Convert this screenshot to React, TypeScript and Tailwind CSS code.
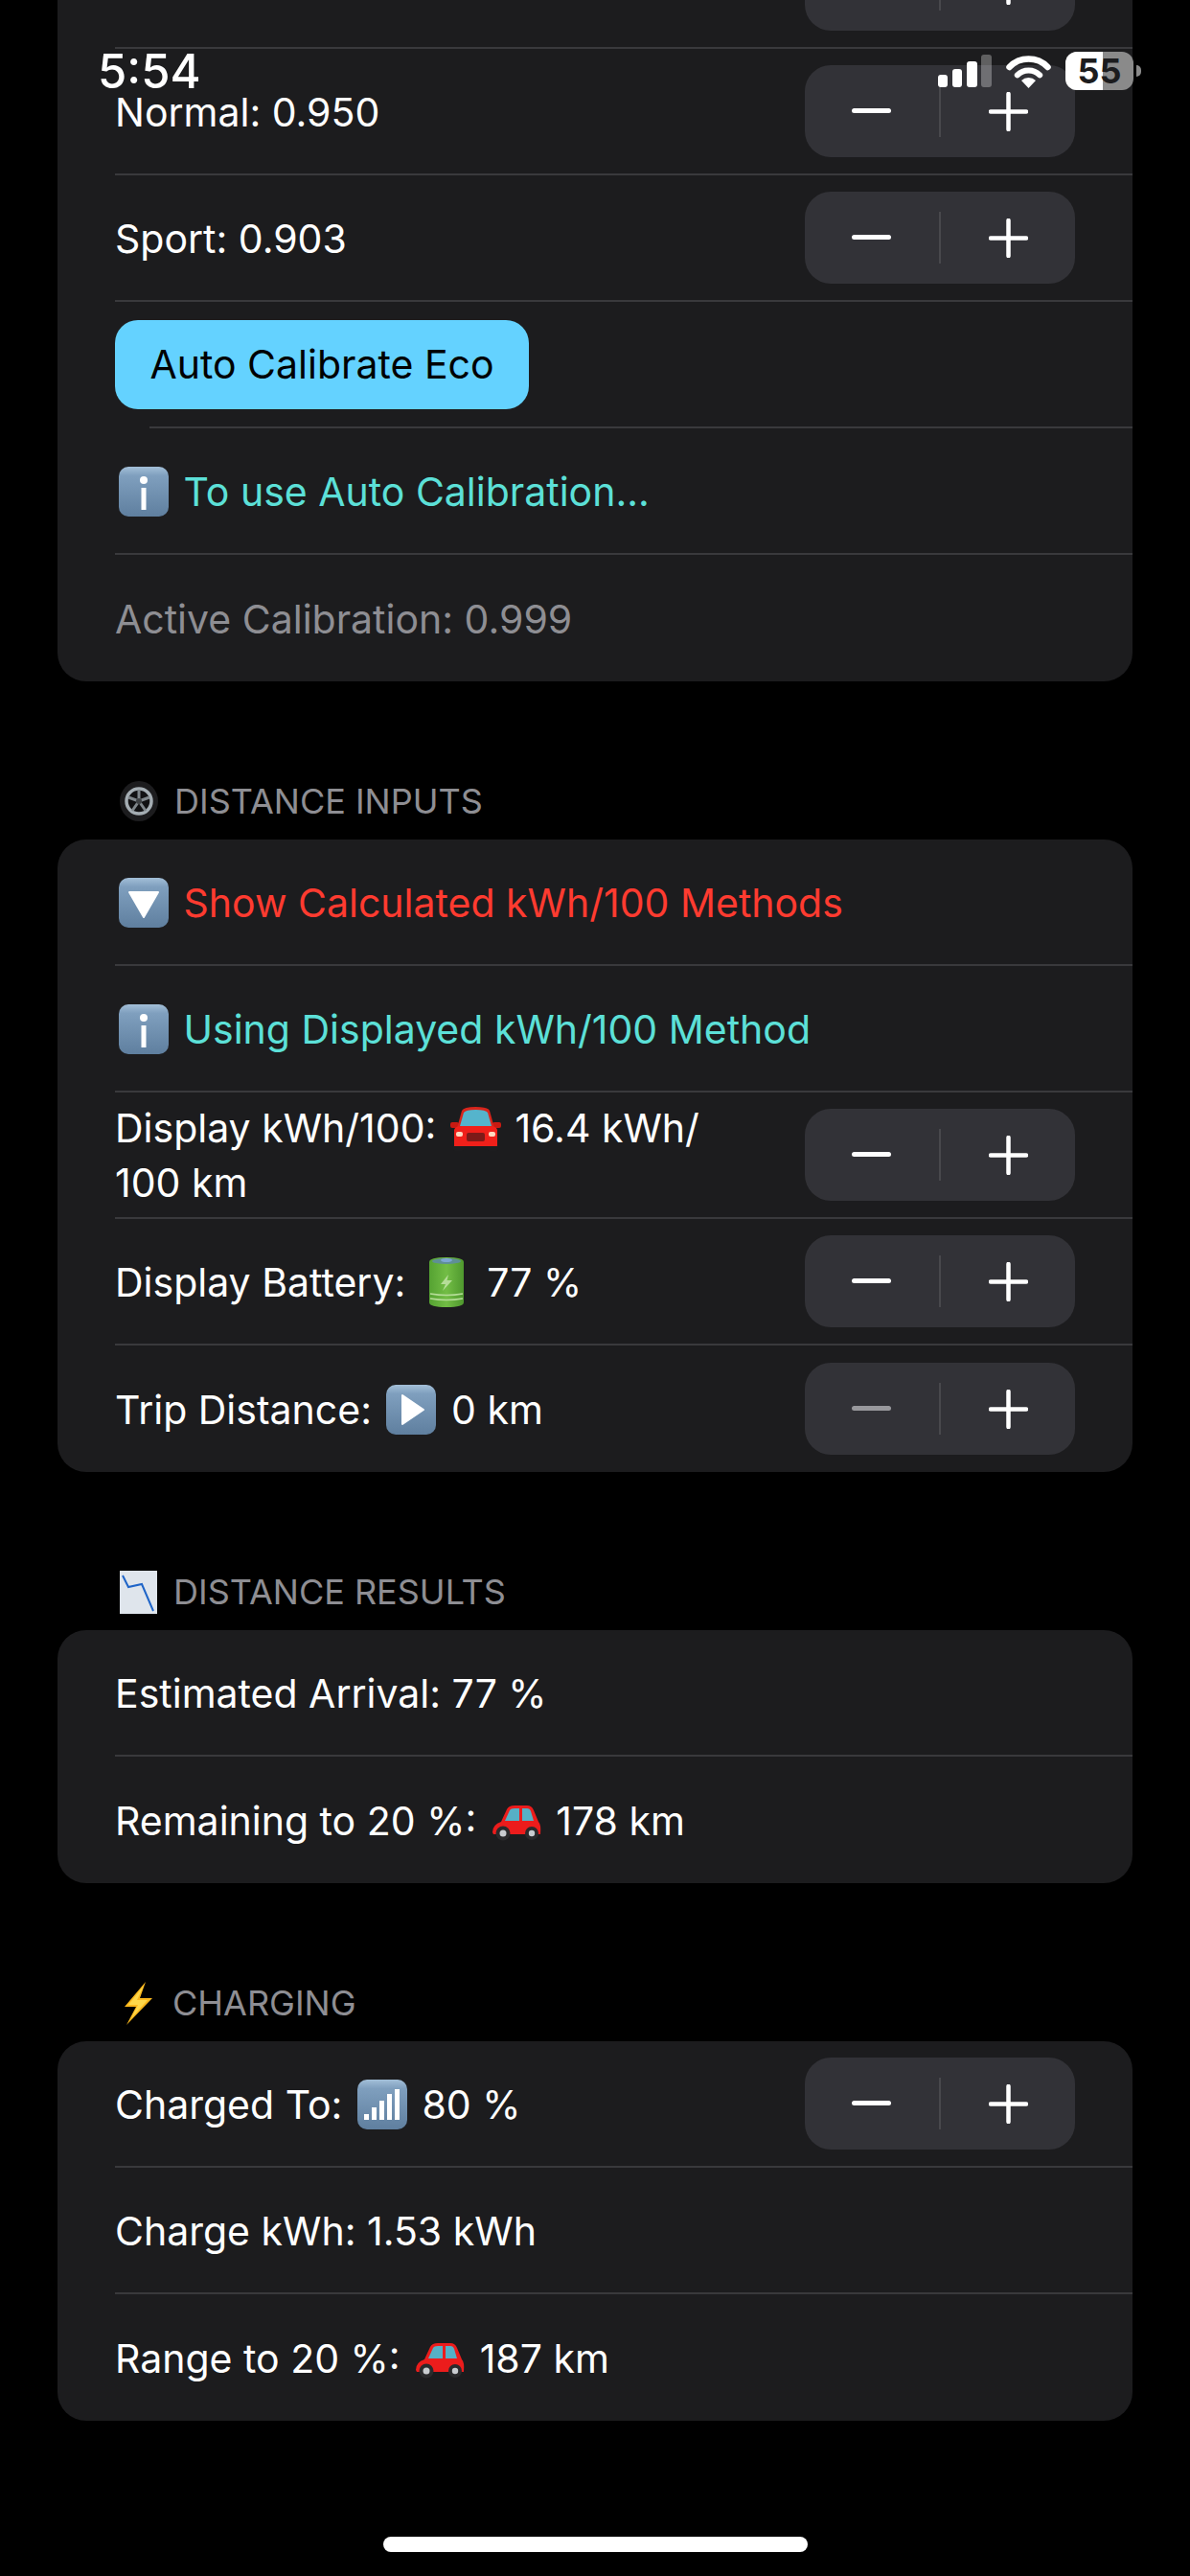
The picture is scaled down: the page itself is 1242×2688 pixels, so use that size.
import { ReactNode } from 'react'

const font = { fontFamily: 'Inter, "Noto Sans", sans-serif' }

function BlueBox({ children }: { children: ReactNode }) {
  return (
    <svg viewBox="0 0 52 52" className="inline-block w-[52px] h-[52px] align-[-11px] mx-[4px]">
      <defs>
        <linearGradient id="boxFill" x1="0" y1="0" x2="0" y2="1">
          <stop offset="0" stopColor="#a3bfd8" />
          <stop offset="0.18" stopColor="#7f9fbe" />
          <stop offset="1" stopColor="#5f7f9f" />
        </linearGradient>
      </defs>
      <rect width="52" height="52" rx="10" fill="url(#boxFill)" />
      {children}
    </svg>
  )
}

const InfoEmoji = () => (
  <BlueBox>
    <circle cx="26" cy="14" r="4" fill="#fff" />
    <rect x="23.5" y="22" width="5" height="23" fill="#fff" />
  </BlueBox>
)

const DownEmoji = () => (
  <BlueBox>
    <path d="M11 15H41L26 41Z" fill="#fff" stroke="#fff" strokeWidth="2" strokeLinejoin="round" />
  </BlueBox>
)

const PlayEmoji = () => (
  <BlueBox>
    <path d="M17 11L39 26L17 41Z" fill="#fff" stroke="#fff" strokeWidth="2" strokeLinejoin="round" />
  </BlueBox>
)

const SignalEmoji = () => (
  <BlueBox>
    <rect x="7" y="36" width="5" height="6" fill="#fff" />
    <rect x="15" y="29" width="5" height="13" fill="#fff" />
    <rect x="23" y="22" width="5" height="20" fill="#fff" />
    <rect x="31" y="15" width="5" height="27" fill="#fff" />
    <rect x="39" y="10" width="5" height="32" fill="#fff" />
  </BlueBox>
)

const FrontCarEmoji = () => (
  <svg viewBox="0 0 53 46" className="inline-block w-[53px] h-[46px] align-[-9px] mx-[3px]">
    <rect x="3" y="38" width="11" height="8" rx="2" fill="#1d1d1f" />
    <rect x="39" y="38" width="11" height="8" rx="2" fill="#1d1d1f" />
    <rect x="0" y="16" width="9" height="6" rx="2" fill="#c81a12" />
    <rect x="44" y="16" width="9" height="6" rx="2" fill="#c81a12" />
    <path d="M12 4Q14 0 26.500 0T41 4L46 22H7Z" fill="#d8251c" />
    <path d="M14 6Q16 3 26.500 3T39 6L43 20H10Z" fill="#55b4cc" />
    <path d="M4 24Q5 20 12 20H41Q48 20 49 24V41H4Z" fill="#f0201a" />
    <rect x="17" y="27" width="19" height="9" rx="2" fill="#7d1a18" />
    <rect x="6" y="26" width="7" height="5" rx="2" fill="#ffd9c0" />
    <rect x="40" y="26" width="7" height="5" rx="2" fill="#ffd9c0" />
  </svg>
)

const SideCarEmoji = () => (
  <svg viewBox="0 0 52 38" className="inline-block w-[52px] h-[38px] align-[-6px] mx-[4px]">
    <path d="M1 29Q1 21 10 18L16 5Q18 1 24 1H37Q42 1 44 6L49 18Q52 21 51 31H2Z" fill="#ec1c1c" />
    <path d="M19 6Q20 4 24 4H29V17H14Z" fill="#56b0c6" />
    <path d="M32 4H37Q40 4 41 7L44 17H32Z" fill="#56b0c6" />
    <circle cx="12" cy="30" r="7.500" fill="#2a2a2c" />
    <circle cx="12" cy="30" r="3.500" fill="#c9ccd0" />
    <circle cx="42" cy="30" r="7" fill="#2a2a2c" />
    <circle cx="42" cy="30" r="3.200" fill="#c9ccd0" />
  </svg>
)

const BatteryEmoji = () => (
  <svg viewBox="0 0 36 52" className="inline-block w-[38px] h-[52px] align-[-11px] mx-[12px]">
    <defs>
      <linearGradient id="cell" x1="0" y1="0" x2="1" y2="0">
        <stop offset="0" stopColor="#55a232" />
        <stop offset="0.5" stopColor="#72bd45" />
        <stop offset="1" stopColor="#4f982e" />
      </linearGradient>
    </defs>
    <path d="M0 5Q0 0 18 0T36 5V47Q36 52 18 52T0 47Z" fill="url(#cell)" />
    <ellipse cx="18" cy="4" rx="15" ry="3" fill="#5f8f96" />
    <ellipse cx="18" cy="3" rx="6" ry="2" fill="#7da6d4" />
    <path d="M20 18L12 28H17L14 35L24 24H18.500Z" fill="#b5dd98" />
    <path d="M1 38Q18 41 35 38M1 43Q18 46 35 43" stroke="#b5dd98" strokeWidth="1.500" fill="none" />
  </svg>
)

const WheelEmoji = () => (
  <svg viewBox="0 0 40 42" className="w-[40px] h-[42px] shrink-0">
    <ellipse cx="20" cy="21" rx="20" ry="21" fill="#1c1c1e" />
    <circle cx="20" cy="21" r="13" fill="#111113" stroke="#a4adb3" strokeWidth="3.500" />
    <path d="M20 21V9M20 21L31 17M20 21L27 31M20 21L13 31M20 21L9 17" stroke="#7f868b" strokeWidth="3" />
    <circle cx="20" cy="21" r="3" fill="#3e4144" />
  </svg>
)

const ChartEmoji = () => (
  <svg viewBox="0 0 39 45" className="w-[39px] h-[45px] shrink-0">
    <rect width="39" height="45" fill="#dfe5ec" />
    <path d="M3 5L9 17L23 14L35 42" stroke="#1f65c8" strokeWidth="2" fill="none" />
  </svg>
)

const ZapEmoji = () => (
  <svg viewBox="0 0 30 45" className="w-[30px] h-[45px] shrink-0 mx-[4px]">
    <path d="M23 0L1 26H13L3 45L30 17H17Z" fill="#fbb81d" />
    <path d="M21 4L5 24H15L8 38L25 19H14Z" fill="#ffd84a" />
  </svg>
)

function Stepper({ minusDim = false }: { minusDim?: boolean }) {
  return (
    <div className="flex items-center w-[282px] h-[96px] rounded-[27px] bg-[#323237] shrink-0">
      <div className="flex-1 flex justify-center">
        <div className={`w-[41px] h-[5px] rounded-full -translate-x-[1px] -translate-y-[1px] ${minusDim ? 'bg-[#98989c]' : 'bg-white'}`} />
      </div>
      <div className="w-[2px] h-[54px] bg-[#48484c]" />
      <div className="flex-1 flex justify-center">
        <svg viewBox="0 0 41 41" className="w-[41px] h-[41px]">
          <path d="M2 20.500H39M20.500 2V39" stroke="#fff" strokeWidth="4.500" strokeLinecap="round" />
        </svg>
      </div>
    </div>
  )
}

function Row({ children, stepper, minusDim, last }: { children: ReactNode; stepper?: boolean; minusDim?: boolean; last?: boolean }) {
  return (
    <div className={`ml-[60px] pr-[60px] h-[132px] flex items-center justify-between border-[#39393c] ${last ? '' : 'border-b-2'}`}>
      <div className="pt-[2px] text-[41px] leading-[57px] whitespace-nowrap">{children}</div>
      {stepper && <Stepper minusDim={minusDim} />}
    </div>
  )
}

function Section({ icon, title, children }: { icon: ReactNode; title: string; children: ReactNode }) {
  return (
    <>
      <div className="mt-[85px] h-[80px] flex items-center gap-[17px] pl-[65px] text-[36px] text-[#8e8e93]">
        {icon}
        <span>{title}</span>
      </div>
      <div className="rounded-[30px] bg-[#1c1c1e] text-white">{children}</div>
    </>
  )
}

export default function App() {
  return (
    <div className="relative w-[1242px] h-[2688px] bg-black overflow-hidden" style={font}>
      <div className="-mt-[81px] px-[60px]">
        {/* Calibration card, scrolled partly off the top */}
        <div className="rounded-[30px] bg-[#1c1c1e] text-white">
          <Row stepper>Eco: 0.999</Row>
          <Row stepper>Normal: 0.950</Row>
          <Row stepper>Sport: 0.903</Row>
          <div className="ml-[96px] h-[132px] flex items-center border-b-2 border-[#39393c]">
            <button className="-ml-[36px] pt-[2px] h-[93px] w-[432px] rounded-[24px] bg-[#64d2ff] text-black text-[41px]">Auto Calibrate Eco</button>
          </div>
          <Row>
            <span className="text-[#5ce0d8]"><InfoEmoji /> To use Auto Calibration...</span>
          </Row>
          <Row last>
            <span className="text-[#8e8e93]">Active Calibration: 0.999</span>
          </Row>
        </div>

        <Section icon={<WheelEmoji />} title="DISTANCE INPUTS">
          <Row>
            <span className="text-[#ff3b30]"><DownEmoji /> Show Calculated kWh/100 Methods</span>
          </Row>
          <Row>
            <span className="text-[#5ce0d8]"><InfoEmoji /> Using Displayed kWh/100 Method</span>
          </Row>
          <Row stepper>
            Display kWh/100: <FrontCarEmoji /> 16.4 kWh/<br />100 km
          </Row>
          <Row stepper>
            Display Battery: <BatteryEmoji /> 77 %
          </Row>
          <Row stepper minusDim last>
            Trip Distance: <PlayEmoji /> 0 km
          </Row>
        </Section>

        <Section icon={<ChartEmoji />} title="DISTANCE RESULTS">
          <Row>Estimated Arrival: 77 %</Row>
          <Row last>
            Remaining to 20 %: <SideCarEmoji /> 178 km
          </Row>
        </Section>

        <Section icon={<ZapEmoji />} title="CHARGING">
          <Row stepper>
            Charged To: <SignalEmoji /> 80 %
          </Row>
          <Row>Charge kWh: 1.53 kWh</Row>
          <Row last>
            Range to 20 %: <SideCarEmoji /> 187 km
          </Row>
        </Section>
      </div>

      {/* Status bar */}
      <div className="absolute top-[50px] left-[102px] right-[51px] h-[48px] flex items-center justify-between text-white">
        <span className="text-[49px] leading-none font-medium">5:54</span>
        <div className="flex items-center">
          <svg viewBox="0 0 56 34" className="w-[56px] h-[34px]">
            <rect x="0" y="21" width="10" height="13" rx="3" fill="#fff" />
            <rect x="15" y="15" width="10" height="19" rx="3" fill="#fff" />
            <rect x="30" y="7" width="11" height="27" rx="3" fill="#fff" />
            <rect x="45" y="0" width="11" height="34" rx="3" fill="#fff" fillOpacity="0.3" />
          </svg>
          <svg viewBox="0 0 47 35" className="ml-[15px] w-[47px] h-[35px]">
            <path d="M3.500 13A28 28 0 0 1 43.500 13" stroke="#fff" strokeWidth="6.500" fill="none" strokeLinecap="round" />
            <path d="M11.800 21.300A16.500 16.500 0 0 1 35.200 21.300" stroke="#fff" strokeWidth="6" fill="none" strokeLinecap="round" />
            <path d="M23.500 35L16 27A11 11 0 0 1 31 27Z" fill="#fff" />
          </svg>
          <div className="ml-[15px] relative w-[71px] h-[40px] rounded-[12px] overflow-hidden bg-[#8a8a8a] flex items-center justify-center">
            <div className="absolute inset-y-0 left-0 w-[39px] bg-white" />
            <span className="relative text-[36px] leading-none font-bold text-[#1c1c1e]">55</span>
          </div>
          <div className="ml-[3px] w-[5px] h-[12px] rounded-r-full bg-[#8a8a8a]" />
        </div>
      </div>

      {/* Home indicator */}
      <div className="absolute bottom-[25px] left-[400px] w-[443px] h-[16px] rounded-full bg-white" />
    </div>
  )
}
